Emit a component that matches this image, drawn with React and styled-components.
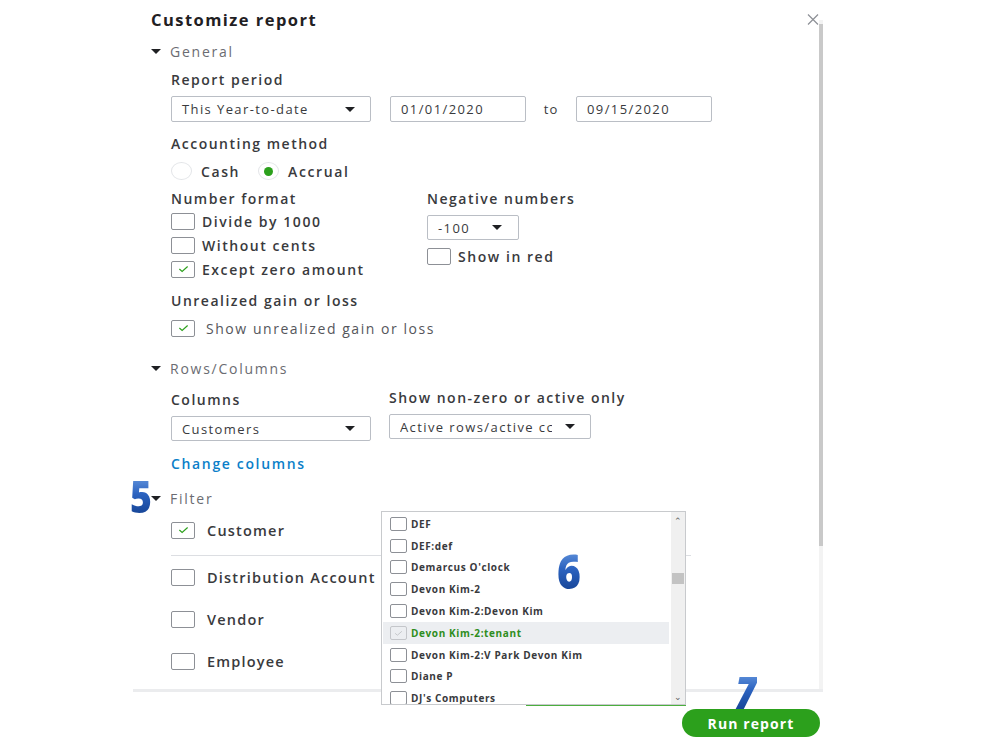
import React from "react";
import styled, { createGlobalStyle } from "styled-components";

const GlobalStyle = createGlobalStyle`
  html, body {
    margin: 0;
    padding: 0;
    background: #ffffff;
    font-family: "Open Sans", "Liberation Sans", sans-serif;
    color: #393a3d;
  }
`;

const Page = styled.div`
  position: relative;
  width: 999px;
  height: 749px;
  overflow: hidden;
`;

const Panel = styled.div`
  position: relative;
  margin-left: 133px;
  width: 690px;
  height: 692px;
  padding: 9px 0 0 18px;
  box-sizing: border-box;
  border-bottom: 3px solid #ebecee;
`;

const ScrollTrack = styled.div`
  position: absolute;
  right: 0;
  top: 20px;
  bottom: 0;
  width: 4px;
  background: #f3f3f3;

  &::before {
    content: "";
    position: absolute;
    left: 0;
    right: 0;
    top: 4px;
    height: 522px;
    background: #c9c9c9;
  }
`;

const TitleRow = styled.div`
  display: flex;
  justify-content: space-between;
  align-items: center;
  height: 20px;
  padding-right: 4px;
`;

const Title = styled.h1`
  margin: 0;
  font-size: 16.5px;
  font-weight: 700;
  letter-spacing: 1.45px;
  color: #1f2023;
`;

const SectionHead = styled.div`
  display: flex;
  align-items: center;
  gap: 9px;
  height: 20px;
  margin-top: ${(p) => p.$mt || 0}px;
  font-size: 14px;
  letter-spacing: 1.75px;
  color: #6b6c72;

  &::before {
    content: "";
    width: 0;
    height: 0;
    border-left: 5px solid transparent;
    border-right: 5px solid transparent;
    border-top: 5px solid #1f2023;
  }
`;

const Indent = styled.div`
  padding-left: 20px;
`;

const Label = styled.div`
  height: 20px;
  line-height: 20px;
  margin-top: ${(p) => p.$mt || 0}px;
  font-size: 14px;
  font-weight: 600;
  letter-spacing: 1.5px;
  color: #393a3d;
  white-space: nowrap;
`;

const Row = styled.div`
  display: flex;
  align-items: center;
  margin-top: ${(p) => p.$mt || 0}px;
`;

const Columns = styled.div`
  display: grid;
  grid-template-columns: ${(p) => p.$left}px auto;
  align-items: start;
  margin-top: ${(p) => p.$mt || 0}px;
`;

const Col = styled.div`
  padding-top: ${(p) => p.$pt || 0}px;
`;

const Field = styled.div`
  display: flex;
  align-items: center;
  justify-content: space-between;
  box-sizing: border-box;
  width: ${(p) => p.$w}px;
  height: ${(p) => p.$h || 26}px;
  margin-left: ${(p) => p.$ml || 0}px;
  margin-top: ${(p) => p.$mt || 0}px;
  padding: 0 ${(p) => p.$pr || 10}px 0 10px;
  border: 1px solid #babec5;
  border-radius: 2px;
  font-size: 13px;
  letter-spacing: 1.4px;
  color: #393a3d;
  white-space: nowrap;
  overflow: hidden;
`;

const FieldText = styled.span`
  overflow: hidden;
  width: ${(p) => (p.$w ? `${p.$w}px` : "auto")};
`;

const Caret = styled.span`
  flex: none;
  width: 0;
  height: 0;
  border-left: 5px solid transparent;
  border-right: 5px solid transparent;
  border-top: 5px solid #1f2023;
`;

const ToText = styled.span`
  width: 50px;
  text-align: center;
  font-size: 13px;
  letter-spacing: 1px;
`;

const Radio = styled.span`
  display: inline-flex;
  align-items: center;
  justify-content: center;
  width: 21px;
  height: 18px;
  border: 1px solid #e3e5e8;
  border-radius: 50%;
  box-sizing: border-box;

  &::after {
    content: "";
    display: ${(p) => (p.$on ? "block" : "none")};
    width: 9px;
    height: 9px;
    border-radius: 50%;
    background: #2ca01c;
  }
`;

const Option = styled.span`
  font-size: 14px;
  font-weight: 600;
  letter-spacing: 1.6px;
  margin: 0 ${(p) => p.$mr || 0}px 0 9px;
`;

const CheckRow = styled.label`
  display: flex;
  align-items: center;
  gap: ${(p) => p.$gap || 7}px;
  height: ${(p) => p.$h || 24}px;
  margin-top: ${(p) => p.$mt || 0}px;
  font-size: ${(p) => p.$fs || 14}px;
  font-weight: ${(p) => (p.$light ? 400 : 600)};
  letter-spacing: ${(p) => p.$ls || 1.55}px;
  color: ${(p) => (p.$light ? "#55565b" : "#393a3d")};
  white-space: nowrap;
`;

const Box = styled.span`
  flex: none;
  display: inline-flex;
  align-items: center;
  justify-content: center;
  box-sizing: border-box;
  width: ${(p) => p.$w || 24}px;
  height: ${(p) => p.$h || 17}px;
  border: 1px solid ${(p) => (p.$muted ? "#c4c6ca" : "#8d9096")};
  border-radius: 2px;
  background: ${(p) => (p.$muted ? "#eceef1" : "#fff")};
`;

const LinkText = styled.a`
  display: block;
  height: 20px;
  line-height: 20px;
  margin-top: ${(p) => p.$mt || 0}px;
  font-size: 14px;
  font-weight: 600;
  letter-spacing: 1.65px;
  color: #0b7fc9;
  text-decoration: none;
`;

const Divider = styled.hr`
  margin: 4px 0 0 0;
  width: 520px;
  border: 0;
  border-top: 1px solid #dcdee2;
`;

const Footer = styled.div`
  display: flex;
  justify-content: flex-end;
  margin-left: 133px;
  width: 690px;
  padding: 17px 3px 0 0;
  box-sizing: border-box;
`;

const RunButton = styled.button`
  width: 138px;
  height: 28px;
  border: 0;
  border-radius: 14px;
  background: #2ca01c;
  color: #fff;
  font-family: inherit;
  font-size: 14px;
  font-weight: 700;
  letter-spacing: 1.1px;
`;

const Dropdown = styled.div`
  position: absolute;
  left: 381px;
  top: 511px;
  width: 305px;
  height: 194px;
  display: flex;
  background: #fff;
  border: 1px solid #c8cacd;
  box-sizing: border-box;

  &::after {
    content: "";
    position: absolute;
    left: 144px;
    right: -1px;
    bottom: -2px;
    height: 1px;
    background: #4caf3e;
  }
`;

const List = styled.ul`
  flex: 1;
  margin: 0;
  padding: 1px 2px 0 1px;
  list-style: none;
  overflow: hidden;
`;

const Item = styled.li`
  display: flex;
  align-items: center;
  gap: 4px;
  height: 21.8px;
  padding-left: 7px;
  background: ${(p) => (p.$active ? "#eceef1" : "transparent")};
  font-size: 10px;
  font-weight: 700;
  letter-spacing: 0.62px;
  color: ${(p) => (p.$active ? "#2e8d20" : "#393a3d")};
  white-space: nowrap;
`;

const ScrollBar = styled.div`
  position: relative;
  width: 14px;
  background: #f0f0f0;
  display: flex;
  flex-direction: column;
  justify-content: space-between;
  align-items: center;
  padding: 2px 0 1px;
  font-size: 9px;
  color: #606060;
`;

const Thumb = styled.div`
  position: absolute;
  left: 1px;
  right: 1px;
  top: 61px;
  height: 11px;
  background: #c3c3c3;
`;

const Marker = styled.div`
  position: absolute;
  left: ${(p) => p.$x}px;
  top: ${(p) => p.$y}px;
  font-family: "Open Sans", "Liberation Sans", sans-serif;
  font-size: ${(p) => p.$size || 44}px;
  font-weight: 800;
  line-height: 1;
  font-style: ${(p) => (p.$italic ? "italic" : "normal")};
  background: linear-gradient(180deg, #6a9be0 0%, #2c63c0 45%, #123f8f 100%);
  -webkit-background-clip: text;
  background-clip: text;
  color: transparent;
  transform: scaleX(0.85);
`;

const Tick = ({ color = "#2ca01c", size = 11 }) => (
  <svg width={size} height={size * 0.7} viewBox="0 0 12 8">
    <path d="M1.5 4.2 L4.5 6.8 L10.5 1.5" fill="none" stroke={color} strokeWidth="1.3" />
  </svg>
);

const Close = () => (
  <svg width="12" height="11" viewBox="0 0 12 11">
    <path d="M1 0.5 L11 10.5 M11 0.5 L1 10.5" stroke="#8d9096" strokeWidth="1.2" />
  </svg>
);

const Check = ({ children, checked, ...rest }) => (
  <CheckRow {...rest}>
    <Box>{checked && <Tick />}</Box>
    {children}
  </CheckRow>
);

const names = [
  "DEF",
  "DEF:def",
  "Demarcus O'clock",
  "Devon Kim-2",
  "Devon Kim-2:Devon Kim",
  "Devon Kim-2:tenant",
  "Devon Kim-2:V Park Devon Kim",
  "Diane P",
  "DJ's Computers",
];

export default function App() {
  return (
    <Page>
      <GlobalStyle />
      <Panel>
        <ScrollTrack />
        <TitleRow>
          <Title>Customize report</Title>
          <Close />
        </TitleRow>

        <SectionHead $mt={12}>General</SectionHead>
        <Indent>
          <Label $mt={9}>Report period</Label>
          <Row $mt={6}>
            <Field $w={200} $pr={15}>
              This Year-to-date <Caret />
            </Field>
            <Field $w={136} $ml={19}>01/01/2020</Field>
            <ToText>to</ToText>
            <Field $w={136}>09/15/2020</Field>
          </Row>

          <Label $mt={12}>Accounting method</Label>
          <Row $mt={7} style={{ height: 20 }}>
            <Radio />
            <Option $mr={18}>Cash</Option>
            <Radio $on />
            <Option>Accrual</Option>
          </Row>

          <Columns $left={256} $mt={8}>
            <Col>
              <Label>Number format</Label>
              <Check>Divide by 1000</Check>
              <Check>Without cents</Check>
              <Check checked>Except zero amount</Check>
            </Col>
            <Col>
              <Label>Negative numbers</Label>
              <Field $w={92} $h={25} $mt={6} $pr={16}>
                -100 <Caret />
              </Field>
              <Check $mt={4}>Show in red</Check>
            </Col>
          </Columns>

          <Label $mt={10}>Unrealized gain or loss</Label>
          <Check checked $light $gap={11} $mt={5}>
            Show unrealized gain or loss
          </Check>
        </Indent>

        <SectionHead $mt={18}>Rows/Columns</SectionHead>
        <Indent>
          <Columns $left={218} $mt={10}>
            <Col $pt={2}>
              <Label>Columns</Label>
              <Field $w={200} $h={25} $mt={6} $pr={15}>
                Customers <Caret />
              </Field>
            </Col>
            <Col>
              <Label>Show non-zero or active only</Label>
              <Field $w={202} $h={25} $mt={6} $pr={15}>
                <FieldText $w={152}>Active rows/active cc</FieldText>
                <Caret />
              </Field>
            </Col>
          </Columns>
          <LinkText $mt={13}>Change columns</LinkText>
        </Indent>

        <SectionHead $mt={14}>Filter</SectionHead>
        <Indent>
          <Check checked $h={42} $gap={12} $mt={1} $fs={14.5} $ls={1.2}>
            Customer
          </Check>
          <Divider />
          <Check $h={42} $gap={12} $fs={14.5} $ls={1.2}>Distribution Account</Check>
          <Check $h={42} $gap={12} $fs={14.5} $ls={1.2}>Vendor</Check>
          <Check $h={42} $gap={12} $fs={14.5} $ls={1.2}>Employee</Check>
        </Indent>
      </Panel>

      <Footer>
        <RunButton>Run report</RunButton>
      </Footer>

      <Dropdown>
        <List>
          {names.map((n) => {
            const active = n === "Devon Kim-2:tenant";
            return (
              <Item key={n} $active={active}>
                <Box $w={17} $h={14} $muted={active}>
                  {active && <Tick color="#c4c6ca" size={9} />}
                </Box>
                {n}
              </Item>
            );
          })}
        </List>
        <ScrollBar>
          <span>&#8963;</span>
          <Thumb />
          <span>&#8964;</span>
        </ScrollBar>
      </Dropdown>

      <Marker $x={128} $y={474}>5</Marker>
      <Marker $x={555} $y={547} $size={48}>6</Marker>
      <Marker $x={733} $y={670} $italic>7</Marker>
    </Page>
  );
}
